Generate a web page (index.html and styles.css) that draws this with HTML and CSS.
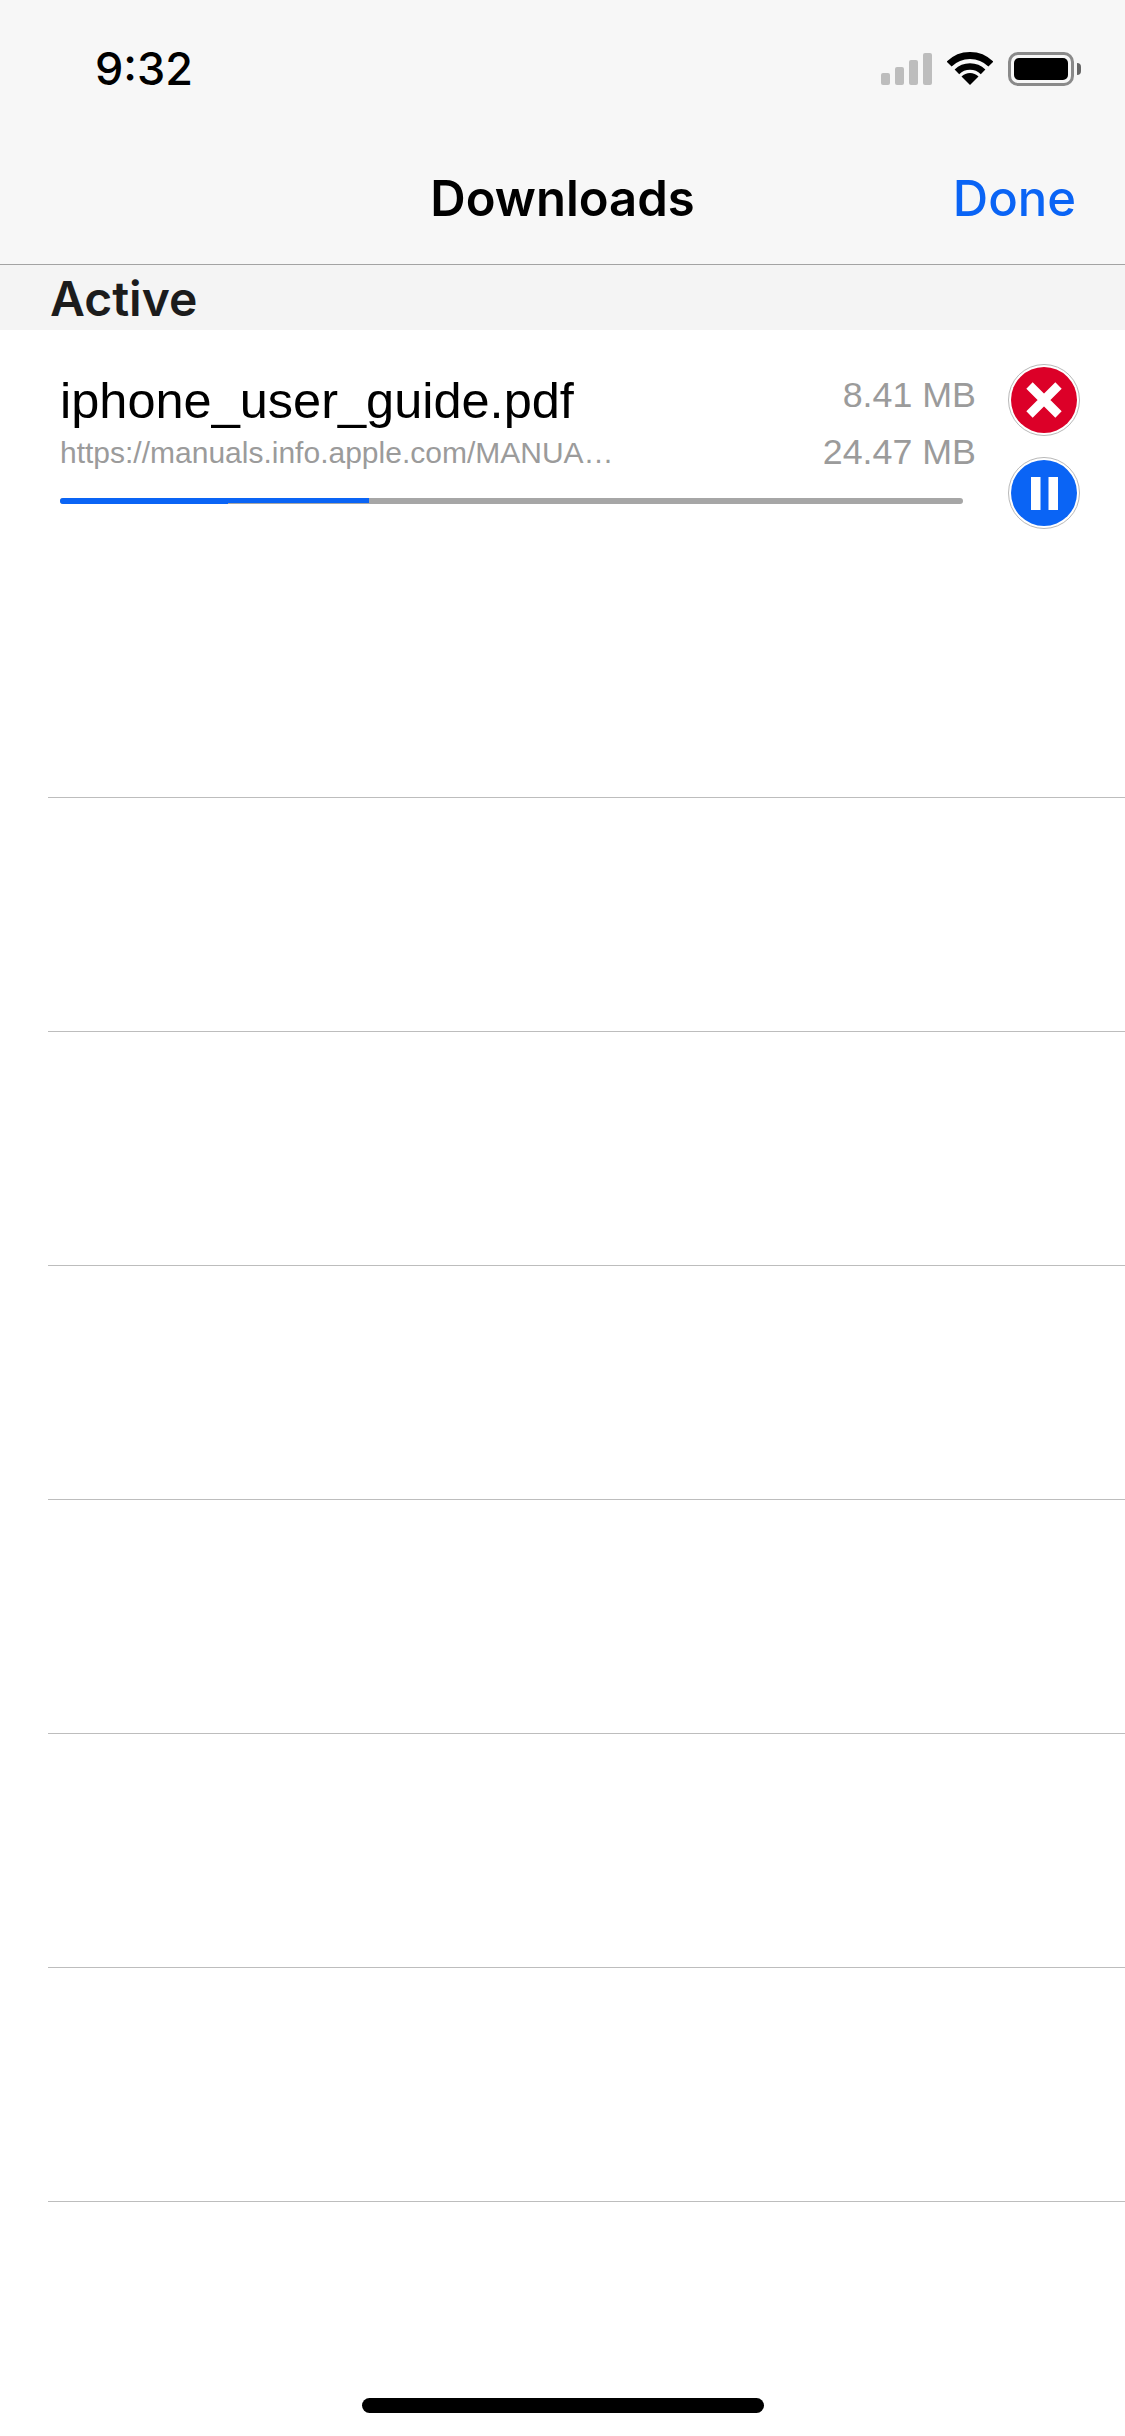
FILE: index.html
```html
<!DOCTYPE html>
<html lang="en">

<head>
  <meta charset="UTF-8">
  <meta name="viewport" content="width=device-width, initial-scale=1.0">
  <title>Downloads</title>
  <link rel="stylesheet" href="styles.css">
</head>

<body>
  <header class="header">
    <div class="status-bar">
      <span class="time">9:32</span>
      <div class="status-icons">
        <div class="signal">
          <span class="signal-bar bar-1"></span>
          <span class="signal-bar bar-2"></span>
          <span class="signal-bar bar-3"></span>
          <span class="signal-bar bar-4"></span>
        </div>
        <svg class="wifi" width="46" height="33" viewBox="0 0 46 33">
          <path d="M2.14 12.14A29.5 29.5 0 0 1 43.86 12.14" fill="none" stroke="#000" stroke-width="7" />
          <path d="M9.92 19.92A18.5 18.5 0 0 1 36.08 19.92" fill="none" stroke="#000" stroke-width="6.5" />
          <path d="M23 33L14.5 24.5A12 12 0 0 1 31.5 24.5Z" fill="#000" />
        </svg>
        <div class="battery">
          <div class="battery-body">
            <span class="battery-level"></span>
          </div>
          <span class="battery-cap"></span>
        </div>
      </div>
    </div>
    <nav class="nav-bar">
      <span></span>
      <span class="nav-title">Downloads</span>
      <a href="#" class="nav-done">Done</a>
    </nav>
  </header>

  <h2 class="section-title">Active</h2>

  <ul class="download-list">
    <li class="download-row active-row">
      <div class="download-info">
        <div class="download-text">
          <div class="download-names">
            <div class="file-name">iphone_user_guide.pdf</div>
            <div class="file-url">https://manuals.info.apple.com/MANUA…</div>
          </div>
          <div class="download-sizes">
            <div>8.41 MB</div>
            <div>24.47 MB</div>
          </div>
        </div>
        <div class="progress">
          <span class="progress-start"></span>
          <span class="progress-end"></span>
        </div>
      </div>
      <div class="download-actions">
        <button class="round-button">
          <svg width="72" height="72" viewBox="0 0 72 72">
            <circle cx="36" cy="36" r="35.5" fill="#fff" stroke="#b8b8b8" stroke-width="1" />
            <circle cx="36" cy="36" r="33" fill="#dc0028" />
            <path d="M21.5 21.5L50.5 50.5M50.5 21.5L21.5 50.5" fill="none" stroke="#fff" stroke-width="9" />
          </svg>
        </button>
        <button class="round-button">
          <svg width="72" height="72" viewBox="0 0 72 72">
            <circle cx="36" cy="36" r="35.5" fill="#fff" stroke="#b8b8b8" stroke-width="1" />
            <circle cx="36" cy="36" r="33" fill="#0a64f5" />
            <rect x="23" y="20" width="9.5" height="33" fill="#fff" />
            <rect x="40.5" y="20" width="9.5" height="33" fill="#fff" />
          </svg>
        </button>
      </div>
    </li>
    <li class="download-row"></li>
    <li class="download-row"></li>
    <li class="download-row"></li>
    <li class="download-row"></li>
    <li class="download-row"></li>
    <li class="download-row"></li>
  </ul>

  <div class="home-bar"></div>
</body>

</html>
```

FILE: styles.css
```css
* {
  box-sizing: border-box;
}

html,
body {
  margin: 0;
  height: 100%;
}

body {
  position: relative;
  height: 2436px;
  overflow: hidden;
  background-color: #fff;
  font-family: "Liberation Sans", Arial, sans-serif;
}

.header {
  height: 265px;
  background-color: #f7f7f7;
  border-bottom: 1px solid #a3a3a3;
}

.status-bar {
  display: flex;
  justify-content: space-between;
  height: 100px;
  padding: 52px 44px 0 95px;
}

.time {
  font-family: Inter, sans-serif;
  font-size: 45px;
  font-weight: 500;
  line-height: 34px;
  color: #000;
}

.status-icons {
  display: flex;
  align-items: flex-start;
}

.signal {
  display: flex;
  align-items: flex-end;
  gap: 5px;
  height: 33px;
  margin-right: 15px;
}

.signal-bar {
  width: 9px;
  background-color: #bdbdbd;
  border-radius: 2px;
}

.bar-1 {
  height: 12px;
}

.bar-2 {
  height: 18px;
}

.bar-3 {
  height: 25px;
}

.bar-4 {
  height: 32px;
}

.battery {
  display: flex;
  align-items: center;
  margin-left: 15px;
}

.battery-body {
  width: 66px;
  height: 34px;
  padding: 3px;
  border: 3px solid #8a8a8a;
  border-radius: 10px;
}

.battery-level {
  display: block;
  height: 100%;
  background-color: #000;
  border-radius: 5px;
}

.battery-cap {
  width: 4px;
  height: 12px;
  margin-left: 3px;
  background-color: #666;
  border-radius: 0 4px 4px 0;
}

.nav-bar {
  display: grid;
  grid-template-columns: 1fr auto 1fr;
  align-items: center;
  height: 60px;
  margin-top: 69px;
}

.nav-title {
  font-family: Inter, sans-serif;
  font-size: 49px;
  font-weight: 600;
  line-height: 60px;
  color: #000;
}

.nav-done {
  justify-self: end;
  margin-right: 49px;
  font-family: Inter, sans-serif;
  font-size: 49px;
  font-weight: 500;
  line-height: 60px;
  color: #0a64f5;
  text-decoration: none;
}

.section-title {
  height: 65px;
  margin: 0;
  padding-left: 50px;
  background-color: #f4f4f4;
  font-family: Inter, sans-serif;
  font-size: 48px;
  font-weight: 600;
  line-height: 68px;
  color: #1c1c1c;
}

.download-list {
  margin: 0;
  padding: 0;
  list-style: none;
}

.download-row {
  height: 234px;
  margin-left: 48px;
  border-bottom: 1px solid #bdbdbd;
}

.active-row {
  display: flex;
  align-items: flex-start;
  height: 468px;
  margin-left: 0;
  padding-left: 60px;
  border-bottom: 0;
  background: linear-gradient(#bdbdbd, #bdbdbd) 48px 100% / 100% 1px no-repeat;
}

.download-info {
  width: 916px;
}

.download-text {
  display: flex;
  justify-content: space-between;
}

.download-names {
  padding-top: 41px;
}

.file-name {
  font-size: 50.5px;
  line-height: 60px;
  color: #000;
}

.file-url {
  margin-top: 4px;
  font-size: 30px;
  line-height: 36px;
  color: #9b9b9b;
}

.download-sizes {
  padding-top: 37px;
  font-size: 35.8px;
  line-height: 57px;
  text-align: right;
  color: #9b9b9b;
}

.progress {
  display: flex;
  align-items: flex-start;
  width: 903px;
  height: 6px;
  margin-top: 17px;
  background-color: #a6a6a6;
  border-radius: 3px;
}

.progress-start {
  width: 168px;
  height: 6px;
  background-color: #0a64f5;
  border-radius: 3px 0 0 3px;
}

.progress-end {
  width: 141px;
  height: 5px;
  background-color: #0a64f5;
}

.download-actions {
  display: flex;
  flex-direction: column;
  gap: 21px;
  margin-left: 32px;
  padding-top: 34px;
}

.round-button {
  display: block;
  width: 72px;
  height: 72px;
  padding: 0;
  background: none;
  border: none;
}

.round-button svg {
  display: block;
}

.home-bar {
  position: absolute;
  left: 362px;
  top: 2398px;
  width: 402px;
  height: 15px;
  background-color: #000;
  border-radius: 8px;
}
```
